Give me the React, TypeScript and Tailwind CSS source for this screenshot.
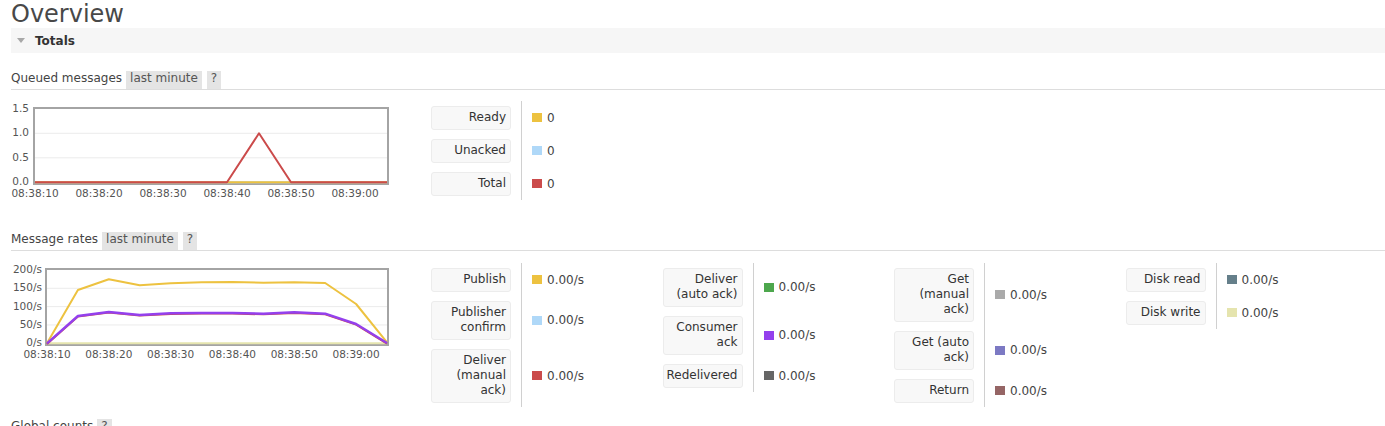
import { Fragment } from "react";

type LegendItem = {
    label: string[];
    swatch: string;
    value: string;
};

const tickText = "fill-[#545454] text-[10.5px] font-['DejaVu_Sans',sans-serif]";

function SectionHeading({ title, tag }: { title: string; tag?: string }) {
    return (
        <div className="flex h-[19px] border-b border-[#dddddd]">
            <span className="mr-[4px] leading-[14px] text-[#444]">{title}</span>
            {tag && (
                <span className="mr-[5px] bg-[#e4e4e4] px-[4px] leading-[14px] text-[#555]">
                    {tag}
                </span>
            )}
            <span className="bg-[#e4e4e4] px-[4px] leading-[14px] text-[#555]">?</span>
        </div>
    );
}

function LegendGroup({ items }: { items: LegendItem[] }) {
    return (
        <div className="grid w-[231.5px] shrink-0 grid-cols-[90px_1fr] self-start">
            {items.map((item, i) => (
                <Fragment key={i}>
                    <div className="py-[4.5px] pr-[10px]">
                        <div className="w-[80px] whitespace-nowrap rounded-[3px] border border-[#ececec] bg-[#f8f8f8] py-[3.5px] pr-[4px] text-right leading-[15px] text-[#333]">
                            {item.label.map((line, j) => (
                                <div key={j}>{line}</div>
                            ))}
                        </div>
                    </div>
                    <div className="flex items-center border-l border-[#d0d0d0] pl-[10px]">
                        <span className={`mr-[5px] h-[9px] w-[10px] ${item.swatch}`} />
                        <span className="text-[#444]">{item.value}</span>
                    </div>
                </Fragment>
            ))}
        </div>
    );
}

function QueuedChart() {
    const x = (t: number) => 35 + t * 6.4;
    const y = (v: number) => 182.3 - v * 49;
    const ticks = ["08:38:10", "08:38:20", "08:38:30", "08:38:40", "08:38:50", "08:39:00"];

    return (
        <svg width={420} height={100} viewBox="11 101 420 100">
            <line x1={35} x2={387} y1={y(0.5)} y2={y(0.5)} stroke="#ebebeb" strokeWidth={1} />
            <line x1={35} x2={387} y1={y(1)} y2={y(1)} stroke="#ebebeb" strokeWidth={1} />
            <rect x={34} y={108} width={354} height={76} fill="none" stroke="#a4a4a4" strokeWidth={2} />
            {/* ready / unacked sit at zero the whole time */}
            <polyline points={`${x(0)},${y(0)} ${x(55)},${y(0)}`} fill="none" stroke="#afd8f8" strokeWidth={2} />
            <polyline points={`${x(0)},${y(0)} ${x(55)},${y(0)}`} fill="none" stroke="#edc240" strokeWidth={2} />
            <polyline
                points={`${x(0)},${y(0)} ${x(30)},${y(0)} ${x(35)},${y(1)} ${x(40)},${y(0)} ${x(55)},${y(0)}`}
                fill="none"
                stroke="#cb4b4b"
                strokeWidth={2}
                strokeLinejoin="round"
                clipPath="url(#q-clip)"
            />
            <clipPath id="q-clip">
                <rect x={35} y={108} width={352} height={75} />
                <rect x={35} y={181} width={192} height={3} />
                <rect x={291} y={181} width={96} height={3} />
            </clipPath>
            {[
                ["1.5", 1.5],
                ["1.0", 1],
                ["0.5", 0.5],
                ["0.0", 0],
            ].map(([label, v]) => (
                <text key={label as string} x={29} y={y(v as number)} textAnchor="end" dominantBaseline="middle" className={tickText}>
                    {label}
                </text>
            ))}
            {ticks.map((t, i) => (
                <text key={t} x={35 + i * 64} y={194} textAnchor="middle" dominantBaseline="middle" className={tickText}>
                    {t}
                </text>
            ))}
        </svg>
    );
}

function RatesChart() {
    const step = 340 / 11;
    const px = (i: number) => 47 + i * step;
    const y = (v: number) => 343.3 - v * 0.3667;
    const publish = [343.3, 290, 279.3, 285.3, 283.3, 282.3, 282, 282.7, 282.3, 283, 304, 342.3];
    const acks = [343.3, 316, 312, 315, 313.3, 313, 313, 313.7, 312.3, 313.7, 324, 343];
    const line = (ys: number[], dy = 0) => ys.map((v, i) => `${px(i)},${v + dy}`).join(" ");
    const ticks = ["08:38:10", "08:38:20", "08:38:30", "08:38:40", "08:38:50", "08:39:00"];

    return (
        <svg width={420} height={100} viewBox="11 263 420 100">
            {[50, 100, 150].map((v) => (
                <line key={v} x1={47} x2={387} y1={y(v)} y2={y(v)} stroke="#ebebeb" strokeWidth={1} />
            ))}
            <rect x={46} y={269} width={342} height={76} fill="none" stroke="#a4a4a4" strokeWidth={2} />
            <polyline points={`${px(0)},343.3 ${px(11)},343.3`} fill="none" stroke="#e5e4ae" strokeWidth={2} />
            <polyline points={line(publish)} fill="none" stroke="#edc240" strokeWidth={2} strokeLinejoin="round" />
            <polyline points={line(acks, 0.6)} fill="none" stroke="#cb4b4b" strokeWidth={2} strokeLinejoin="round" />
            <polyline points={line(acks)} fill="none" stroke="#9440ed" strokeWidth={2.4} strokeLinejoin="round" />
            {[
                ["200/s", 200],
                ["150/s", 150],
                ["100/s", 100],
                ["50/s", 50],
                ["0/s", 0],
            ].map(([label, v]) => (
                <text key={label as string} x={42} y={y(v as number)} textAnchor="end" dominantBaseline="middle" className={tickText}>
                    {label}
                </text>
            ))}
            {ticks.map((t, i) => (
                <text key={t} x={47 + i * step * 2} y={355} textAnchor="middle" dominantBaseline="middle" className={tickText}>
                    {t}
                </text>
            ))}
        </svg>
    );
}

const queued: LegendItem[] = [
    { label: ["Ready"], swatch: "bg-[#edc240]", value: "0" },
    { label: ["Unacked"], swatch: "bg-[#afd8f8]", value: "0" },
    { label: ["Total"], swatch: "bg-[#cb4b4b]", value: "0" },
];

const rates: LegendItem[][] = [
    [
        { label: ["Publish"], swatch: "bg-[#edc240]", value: "0.00/s" },
        { label: ["Publisher", "confirm"], swatch: "bg-[#afd8f8]", value: "0.00/s" },
        { label: ["Deliver", "(manual", "ack)"], swatch: "bg-[#cb4b4b]", value: "0.00/s" },
    ],
    [
        { label: ["Deliver", "(auto ack)"], swatch: "bg-[#4da74d]", value: "0.00/s" },
        { label: ["Consumer", "ack"], swatch: "bg-[#9440ed]", value: "0.00/s" },
        { label: ["Redelivered"], swatch: "bg-[#666666]", value: "0.00/s" },
    ],
    [
        { label: ["Get", "(manual", "ack)"], swatch: "bg-[#aaaaaa]", value: "0.00/s" },
        { label: ["Get (auto", "ack)"], swatch: "bg-[#7c79c3]", value: "0.00/s" },
        { label: ["Return"], swatch: "bg-[#956565]", value: "0.00/s" },
    ],
    [
        { label: ["Disk read"], swatch: "bg-[#657f8a]", value: "0.00/s" },
        { label: ["Disk write"], swatch: "bg-[#e5e4ae]", value: "0.00/s" },
    ],
];

export default function App() {
    return (
        <div className="min-h-screen bg-white pl-[11px] font-['DejaVu_Sans',sans-serif] text-[12px] text-[#444]">
            <h1 className="h-[28px] text-[24px] leading-[28px] font-normal text-[#484848]">Overview</h1>

            {/* Totals */}
            <div className="flex h-[25px] items-center bg-[#f6f6f6] pl-[6px]">
                <span className="h-0 w-0 border-x-[4.5px] border-t-[5px] border-x-transparent border-t-[#a8a8a8]" />
                <span className="ml-[10px] font-bold text-[#333]">Totals</span>
            </div>

            <div className="mt-[18px]">
                <SectionHeading title="Queued messages" tag="last minute" />
            </div>
            <div className="mt-[11px] flex">
                <div className="w-[420px] shrink-0">
                    <QueuedChart />
                </div>
                <LegendGroup items={queued} />
            </div>

            <div className="mt-[31px]">
                <SectionHeading title="Message rates" tag="last minute" />
            </div>
            <div className="mt-[12px] flex">
                <div className="w-[420px] shrink-0">
                    <RatesChart />
                </div>
                {rates.map((group, i) => (
                    <LegendGroup key={i} items={group} />
                ))}
            </div>

            <div className="mt-[12px]">
                <SectionHeading title="Global counts" />
            </div>
        </div>
    );
}
